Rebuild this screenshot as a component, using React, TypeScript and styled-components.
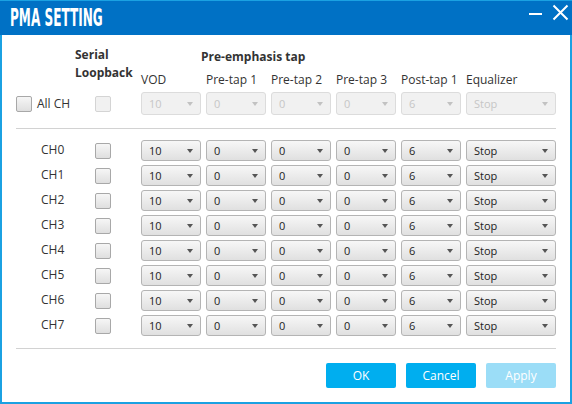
import React from 'react';
import styled, { createGlobalStyle } from 'styled-components';

const GlobalStyle = createGlobalStyle`
  html, body {
    margin: 0;
    padding: 0;
    background: #fff;
  }
  body {
    font-family: "Open Sans", "Noto Sans", sans-serif;
    color: #333;
  }
`;

const COLUMNS = '54px 61px 60px 60px 60px 60px 60px 90px';

const Window = styled.div`
  width: 572px;
  height: 404px;
  display: flex;
  flex-direction: column;
  background: #fff;
`;

const TitleBar = styled.div`
  height: 35px;
  flex: none;
  display: flex;
  align-items: center;
  justify-content: space-between;
  background: #0071c5;
  border-top: 1px solid #1ba1e2;
  box-sizing: border-box;
  padding: 0 3px 0 10px;
`;

const Title = styled.h1`
  margin: 0;
  color: #fff;
  font-family: "DejaVu Sans Condensed", "DejaVu Sans", sans-serif;
  font-weight: bold;
  font-size: 24px;
  line-height: 30px;
  transform: scaleX(0.56);
  transform-origin: left center;
  white-space: nowrap;
`;

const WindowControls = styled.div`
  display: flex;
  align-items: flex-start;
  gap: 10px;
  align-self: stretch;
  padding-top: 3px;
`;

const Body = styled.div`
  flex: 1;
  box-sizing: border-box;
  border: 2px solid #1ba1e2;
  border-top: 0;
  padding: 11px 14px 0;
  display: flex;
  flex-direction: column;
`;

const Grid = styled.div`
  display: grid;
  grid-template-columns: ${COLUMNS};
  column-gap: 5px;
  align-items: center;
`;

const HeaderGrid = styled(Grid)`
  align-items: start;
  font-size: 12px;
  line-height: 18px;
`;

const SerialHead = styled.div`
  grid-column: 2;
  grid-row: 1 / 3;
  font-weight: bold;
`;

const GroupHead = styled.div`
  grid-column: 4 / 9;
  grid-row: 1;
  margin: 2px 0 0 -5px;
  font-weight: bold;
`;

const ColHead = styled.div<{ $col: number }>`
  grid-column: ${(p) => p.$col};
  grid-row: 2;
  margin-top: 5px;
  white-space: nowrap;
`;

const AllRow = styled(Grid)`
  margin-top: 3px;
  height: 23px;
`;

const AllCell = styled.label`
  display: flex;
  align-items: center;
  gap: 5px;
  font-size: 12px;
  white-space: nowrap;
`;

const BoxCell = styled.div`
  padding-left: 20px;
  display: flex;
  align-items: center;
`;

const Checkbox = styled.span<{ $disabled?: boolean }>`
  width: 16px;
  height: 16px;
  box-sizing: border-box;
  border-radius: 2px;
  border: 1px solid ${(p) => (p.$disabled ? '#d4d4d4' : '#a8a8a8')};
  background: ${(p) =>
    p.$disabled
      ? '#f1f1f1'
      : 'linear-gradient(#f6f6f6, #dfdfdf)'};
  flex: none;
`;

const Divider = styled.div<{ $top: number }>`
  margin-top: ${(p) => p.$top}px;
  height: 1px;
  background: #d2d2d2;
  flex: none;
`;

const Channels = styled(Grid)`
  margin-top: 11px;
  grid-auto-rows: 21px;
  row-gap: 4px;
`;

const ChLabel = styled.div`
  padding-left: 25px;
  font-size: 12px;
  margin-top: -3px;
`;

const Select = styled.div<{ $disabled?: boolean }>`
  height: 100%;
  box-sizing: border-box;
  display: flex;
  align-items: center;
  justify-content: space-between;
  padding: 0 7px;
  border-radius: 3px;
  border: 1px solid ${(p) => (p.$disabled ? '#dcdcdc' : '#b4b4b4')};
  background: ${(p) =>
    p.$disabled ? '#f1f1f1' : 'linear-gradient(#f7f7f7, #e0e0e0)'};
  color: ${(p) => (p.$disabled ? '#c6c6c6' : '#222')};
  font-size: 11px;

  &::after {
    content: '';
    border-left: 3.5px solid transparent;
    border-right: 3.5px solid transparent;
    border-top: 4px solid ${(p) => (p.$disabled ? '#c2c2c2' : '#555')};
  }
`;

const Footer = styled.div`
  margin-top: 14px;
  display: flex;
  justify-content: flex-end;
  gap: 10px;
`;

const Button = styled.button<{ $disabled?: boolean }>`
  width: 70px;
  height: 25px;
  border: 0;
  border-radius: 2px;
  background: ${(p) => (p.$disabled ? '#9bddf7' : '#00aeef')};
  color: #fff;
  font-family: "Open Sans", "Noto Sans", sans-serif;
  font-size: 12px;
  padding: 0;
  cursor: pointer;
`;

const subHeads = ['VOD', 'Pre-tap 1', 'Pre-tap 2', 'Pre-tap 3', 'Post-tap 1', 'Equalizer'];
const defaults = ['10', '0', '0', '0', '6', 'Stop'];
const channels = ['CH0', 'CH1', 'CH2', 'CH3', 'CH4', 'CH5', 'CH6', 'CH7'];

const App: React.FC = () => (
  <Window>
    <GlobalStyle />
    <TitleBar>
      <Title>PMA SETTING</Title>
      <WindowControls>
        <svg width="13" height="20" viewBox="0 0 13 20">
          <rect x="0" y="9" width="13" height="2" fill="#fff" />
        </svg>
        <svg width="17" height="17" viewBox="0 0 17 17">
          <path d="M1.5 1.5 L15.5 15.5 M15.5 1.5 L1.5 15.5" stroke="#fff" strokeWidth="2" />
        </svg>
      </WindowControls>
    </TitleBar>

    <Body>
      <HeaderGrid>
        <SerialHead>
          Serial
          <br />
          Loopback
        </SerialHead>
        <GroupHead>Pre-emphasis tap</GroupHead>
        {subHeads.map((h, i) => (
          <ColHead key={h} $col={i + 3}>
            {h}
          </ColHead>
        ))}
      </HeaderGrid>

      <AllRow>
        <AllCell>
          <Checkbox />
          All CH
        </AllCell>
        <BoxCell>
          <Checkbox $disabled />
        </BoxCell>
        {defaults.map((v, i) => (
          <Select key={i} $disabled>
            {v}
          </Select>
        ))}
      </AllRow>

      <Divider $top={13} />

      <Channels>
        {channels.map((ch) => (
          <React.Fragment key={ch}>
            <ChLabel>{ch}</ChLabel>
            <BoxCell>
              <Checkbox />
            </BoxCell>
            {defaults.map((v, i) => (
              <Select key={i}>{v}</Select>
            ))}
          </React.Fragment>
        ))}
      </Channels>

      <Divider $top={12} />

      <Footer>
        <Button>OK</Button>
        <Button>Cancel</Button>
        <Button $disabled>Apply</Button>
      </Footer>
    </Body>
  </Window>
);

export default App;
